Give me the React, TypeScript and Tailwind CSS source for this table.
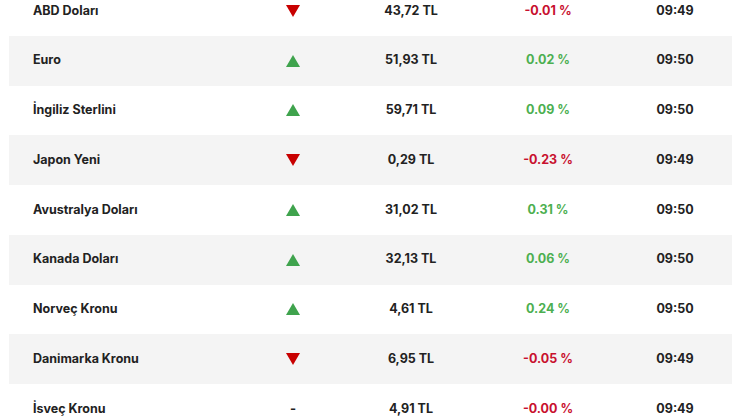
type Trend = "up" | "down" | "flat";

interface Rate {
  name: string;
  trend: Trend;
  price: string;
  change: string;
  time: string;
}

const rates: Rate[] = [
  { name: "ABD Doları", trend: "down", price: "43,72 TL", change: "-0.01 %", time: "09:49" },
  { name: "Euro", trend: "up", price: "51,93 TL", change: "0.02 %", time: "09:50" },
  { name: "İngiliz Sterlini", trend: "up", price: "59,71 TL", change: "0.09 %", time: "09:50" },
  { name: "Japon Yeni", trend: "down", price: "0,29 TL", change: "-0.23 %", time: "09:49" },
  { name: "Avustralya Doları", trend: "up", price: "31,02 TL", change: "0.31 %", time: "09:50" },
  { name: "Kanada Doları", trend: "up", price: "32,13 TL", change: "0.06 %", time: "09:50" },
  { name: "Norveç Kronu", trend: "up", price: "4,61 TL", change: "0.24 %", time: "09:50" },
  { name: "Danimarka Kronu", trend: "down", price: "6,95 TL", change: "-0.05 %", time: "09:49" },
  { name: "İsveç Kronu", trend: "flat", price: "4,91 TL", change: "-0.00 %", time: "09:49" },
];

const TrendIcon = ({ trend }: { trend: Trend }) => {
  if (trend === "flat") return <span className="text-[13px] font-bold text-[#222]">-</span>;
  const up = trend === "up";
  return (
    <svg width="14" height="12" viewBox="0 0 14 12">
      <polygon
        points={up ? "7,0 14,12 0,12" : "0,0 14,0 7,12"}
        fill={up ? "#3fa34d" : "#c80000"}
      />
    </svg>
  );
};

const App = () => {
  return (
    <div className="h-[420px] w-[740px] overflow-hidden bg-white font-['Inter','Liberation_Sans',sans-serif]">
      <div className="-mt-[14px] ml-[9px] w-[723px]">
        {rates.map((rate, index) => (
          <div
            key={rate.name}
            className={`flex h-[49.75px] items-center text-[12.5px] font-bold text-[#222] ${index % 2 === 1 ? "bg-[#f4f4f4]" : ""}`}
          >
            {/* Name */}
            <div className="w-[224px] pl-[24px]">{rate.name}</div>
            {/* Trend */}
            <div className="flex w-[120px] justify-center">
              <TrendIcon trend={rate.trend} />
            </div>
            {/* Price */}
            <div className="w-[116px] text-center">{rate.price}</div>
            {/* Change */}
            <div
              className={`w-[158px] text-center ${rate.change.startsWith("-") ? "text-[#c8102e]" : "text-[#4caf50]"}`}
            >
              {rate.change}
            </div>
            {/* Time */}
            <div className="w-[96px] text-center">{rate.time}</div>
          </div>
        ))}
      </div>
    </div>
  );
};

export default App;
